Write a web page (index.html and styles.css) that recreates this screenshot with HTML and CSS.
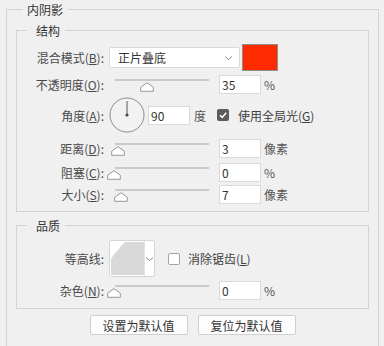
FILE: index.html
```html
<!DOCTYPE html>
<html lang="zh-CN">

<head>
    <meta charset="UTF-8">
    <meta name="viewport" content="width=device-width, initial-scale=1.0">
    <title>内阴影</title>
    <link rel="stylesheet" href="styles.css">
</head>

<body>
    <fieldset class="panel">
        <legend>内阴影</legend>

        <fieldset class="group group-structure">
            <legend>结构</legend>

            <div class="row row-blend">
                <label class="lbl">混合模式(<u>B</u>):</label>
                <div class="select">
                    <span>正片叠底</span>
                    <svg class="chevron" width="9" height="6" viewBox="0 0 9 6">
                        <path d="M1 1.5 L4.5 4.5 L8 1.5" fill="none" stroke="#8a8a8a" stroke-width="1" />
                    </svg>
                </div>
                <div class="swatch"></div>
            </div>

            <div class="row row-opacity">
                <label class="lbl">不透明度(<u>O</u>):</label>
                <div class="slider">
                    <svg class="thumb" style="left: 25px" width="14" height="10" viewBox="0 0 14 10">
                        <path d="M7 0.7 L13.3 5.2 L13.3 9.3 L0.7 9.3 L0.7 5.2 Z" fill="#fff" stroke="#969696" stroke-linejoin="round" />
                    </svg>
                </div>
                <input class="num" type="text" value="35">
                <span class="unit">%</span>
            </div>

            <div class="row row-angle">
                <label class="lbl">角度(<u>A</u>):</label>
                <svg class="dial" width="36" height="36" viewBox="0 0 36 36">
                    <circle cx="18" cy="18" r="17" fill="#f2f2f2" stroke="#8c8c8c" stroke-width="1" />
                    <line x1="18" y1="18" x2="18" y2="4" stroke="#5a5a5a" stroke-width="1" />
                    <circle cx="18" cy="18" r="1.6" fill="#4a4a4a" />
                </svg>
                <input class="num num-angle" type="text" value="90">
                <span class="unit">度</span>
                <span class="check checked">
                    <svg width="12" height="12" viewBox="0 0 12 12">
                        <path d="M3 6.2 L5.2 8.4 L9.2 3.8" fill="none" stroke="#fff" stroke-width="1.6" />
                    </svg>
                </span>
                <span class="check-text">使用全局光(<u>G</u>)</span>
            </div>

            <div class="row row-distance">
                <label class="lbl">距离(<u>D</u>):</label>
                <div class="slider">
                    <svg class="thumb" style="left: -4px" width="14" height="10" viewBox="0 0 14 10">
                        <path d="M7 0.7 L13.3 5.2 L13.3 9.3 L0.7 9.3 L0.7 5.2 Z" fill="#fff" stroke="#969696" stroke-linejoin="round" />
                    </svg>
                </div>
                <input class="num" type="text" value="3">
                <span class="unit">像素</span>
            </div>

            <div class="row row-choke">
                <label class="lbl">阻塞(<u>C</u>):</label>
                <div class="slider">
                    <svg class="thumb" style="left: -8px" width="14" height="10" viewBox="0 0 14 10">
                        <path d="M7 0.7 L13.3 5.2 L13.3 9.3 L0.7 9.3 L0.7 5.2 Z" fill="#fff" stroke="#969696" stroke-linejoin="round" />
                    </svg>
                </div>
                <input class="num" type="text" value="0">
                <span class="unit">%</span>
            </div>

            <div class="row row-size">
                <label class="lbl">大小(<u>S</u>):</label>
                <div class="slider">
                    <svg class="thumb" style="left: -1px" width="14" height="10" viewBox="0 0 14 10">
                        <path d="M7 0.7 L13.3 5.2 L13.3 9.3 L0.7 9.3 L0.7 5.2 Z" fill="#fff" stroke="#969696" stroke-linejoin="round" />
                    </svg>
                </div>
                <input class="num" type="text" value="7">
                <span class="unit">像素</span>
            </div>
        </fieldset>

        <fieldset class="group group-quality">
            <legend>品质</legend>

            <div class="row row-contour">
                <label class="lbl">等高线:</label>
                <div class="contour">
                    <svg class="contour-preview" width="33" height="33" viewBox="0 0 33 33">
                        <rect width="33" height="33" fill="#d9d9d9" />
                        <path d="M0 0 L14 0 L11 3 L8 7 L5 10 L2 14 L0 17 Z" fill="#fff" />
                    </svg>
                    <span class="contour-arrow">
                        <svg width="9" height="6" viewBox="0 0 9 6">
                            <path d="M1 1.5 L4.5 4.5 L8 1.5" fill="none" stroke="#8a8a8a" stroke-width="1" />
                        </svg>
                    </span>
                </div>
                <span class="check"></span>
                <span class="check-text">消除锯齿(<u>L</u>)</span>
            </div>

            <div class="row row-noise">
                <label class="lbl">杂色(<u>N</u>):</label>
                <div class="slider">
                    <svg class="thumb" style="left: -8px" width="14" height="10" viewBox="0 0 14 10">
                        <path d="M7 0.7 L13.3 5.2 L13.3 9.3 L0.7 9.3 L0.7 5.2 Z" fill="#fff" stroke="#969696" stroke-linejoin="round" />
                    </svg>
                </div>
                <input class="num" type="text" value="0">
                <span class="unit">%</span>
            </div>
        </fieldset>

        <div class="buttons">
            <button>设置为默认值</button>
            <button>复位为默认值</button>
        </div>
    </fieldset>
</body>

</html>
```

FILE: styles.css
```css
html,
body {
    margin: 0;
    padding: 0;
}

:root {
    --line-color: #d3d3d3;
    --text-color: #444;
}

body {
    background: #f0f0f0;
    font-family: "Noto Sans CJK SC", "Microsoft YaHei", sans-serif;
    font-size: 12px;
    color: var(--text-color);
    overflow: hidden;
}

fieldset {
    min-inline-size: 0;
    border: 1px solid var(--line-color);
}

legend {
    line-height: 19px;
    color: #333;
}

.panel {
    margin: 0 5px 0 6px;
    padding: 2px 9px 14px 9px;
}

.panel > legend {
    margin-left: 7px;
    padding: 0 5px 0 4px;
}

.group {
    margin: 0;
    padding: 4px 0 7px 0;
}

.group legend {
    margin-left: 10px;
    padding: 0 5px 0 9px;
}

.group-quality {
    margin-top: 4px;
    padding: 5px 0 8px 0;
}

.row {
    display: flex;
    align-items: center;
}

.row .lbl {
    width: 87px;
    text-align: right;
    white-space: nowrap;
    color: #4a4a4a;
}

.row-opacity {
    margin-top: 4px;
}

.row-angle {
    margin-top: 3px;
}

.row-distance {
    margin-top: 6px;
}

.row-choke {
    margin-top: 5px;
}

.row-size {
    margin-top: 3px;
}

.row-noise {
    margin-top: 4px;
}

/* blend mode */
.select {
    margin-left: 5px;
    width: 131px;
    height: 21px;
    box-sizing: border-box;
    background: #fff;
    border: 1px solid #d9d9d9;
    border-radius: 2px;
    display: flex;
    align-items: center;
    justify-content: space-between;
    padding: 0 6px 0 8px;
    color: #333;
}

.swatch {
    margin-left: 2px;
    width: 36px;
    height: 27px;
    box-sizing: border-box;
    background: #fe2a00;
    border: 1px solid #8e8e8e;
}

/* sliders */
.slider {
    position: relative;
    align-self: flex-start;
    margin-left: 11px;
    width: 94px;
    height: 19px;
}

.slider::before {
    content: "";
    position: absolute;
    left: 0;
    right: 0;
    top: 4px;
    height: 2px;
    background: #c9c9c9;
}

.slider .thumb {
    position: absolute;
    top: 7px;
    display: block;
}

.num {
    margin: 0 0 0 10px;
    width: 42px;
    height: 19px;
    box-sizing: border-box;
    border: 1px solid #dadada;
    background: #fff;
    padding: 0 2px;
    font-family: "Noto Sans CJK SC", "Microsoft YaHei", sans-serif;
    font-size: 12px;
    color: #333;
    outline: none;
}

.unit {
    margin-left: 3px;
    color: #555;
}

/* angle */
.dial {
    margin-left: 5px;
    display: block;
}

.num-angle {
    margin-left: 3px;
}

.row-angle .unit {
    margin-left: 4px;
}

.check {
    margin-left: 11px;
    width: 12px;
    height: 12px;
    box-sizing: border-box;
    border: 1px solid #a3a3a3;
    border-radius: 2px;
    background: #fff;
    display: flex;
}

.check.checked {
    border: none;
    background: #5b5b5b;
}

.check-text {
    margin-left: 9px;
    color: #404040;
}

/* contour */
.contour {
    margin-left: 5px;
    width: 46px;
    height: 37px;
    box-sizing: border-box;
    background: #fff;
    border: 1px solid #d6d6d6;
    border-radius: 2px;
    display: flex;
    align-items: center;
    padding-left: 1px;
}

.contour-preview {
    display: block;
}

.contour-arrow {
    flex: 1;
    height: 100%;
    border-left: 1px solid #e2e2e2;
    display: flex;
    align-items: center;
    justify-content: center;
}

.row-contour .check {
    margin-left: 13px;
}

.row-contour .check-text {
    margin-left: 8px;
}

/* buttons */
.buttons {
    display: flex;
    justify-content: center;
    gap: 10px;
    margin-top: 6px;
}

.buttons button {
    width: 98px;
    height: 20px;
    padding: 0;
    background: #fdfdfd;
    border: 1px solid #cfcfcf;
    border-radius: 2px;
    font-family: "Noto Sans CJK SC", "Microsoft YaHei", sans-serif;
    font-size: 12px;
    color: #333;
}
```
